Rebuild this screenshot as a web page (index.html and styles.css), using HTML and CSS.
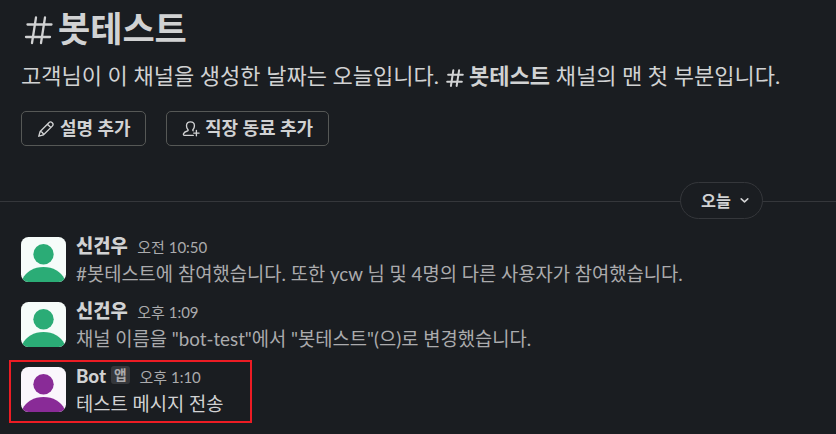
FILE: index.html
```
<!DOCTYPE html>
<html lang="ko">
<head>
<meta charset="utf-8">
<title>봇테스트</title>
<link rel="stylesheet" href="styles.css">
</head>
<body>
<main class="channel">
  <header class="intro">
    <h1 class="title">
      <svg class="hash" viewBox="0 0 32 30" fill="none" stroke="currentColor" stroke-width="2.3" stroke-linecap="round"><path d="M15 2.500 11 28M24 2.500 20 28M6.500 9.500H30.500M5 22H29"/></svg>
      <span>봇테스트</span>
    </h1>
    <p class="desc">고객님이 이 채널을 생성한 날짜는 오늘입니다. <svg class="hash-small" viewBox="0 0 30 30" fill="none" stroke="currentColor" stroke-width="3.4" stroke-linecap="round"><path d="M12.2 2.2 8.2 28.2M21.8 2.2 17.8 28.2M3.6 9.6H28M2 21.4H26.4"/></svg><b>봇테스트</b> 채널의 맨 첫 부분입니다.</p>
    <div class="actions">
      <button class="btn"><svg class="icon" viewBox="0 0 20 20" fill="none" stroke="currentColor" stroke-width="1.5" stroke-linecap="round" stroke-linejoin="round"><path d="M2 18 3.500 12.700 13.200 3C14.300 1.900 15.600 1.800 16.900 3.100S18.100 5.700 17 6.800L7.300 16.500ZM11.600 4.700 15.300 8.400M3.800 12.700C5.500 13.200 6.800 14.500 7.300 16.200"/></svg>설명 추가</button>
      <button class="btn btn-invite"><svg class="icon" viewBox="0 0 20 20" fill="none" stroke="currentColor" stroke-width="1.5" stroke-linecap="round" stroke-linejoin="round"><path d="M12.600 17H2.600C1.600 17 1.400 16.200 1.700 15.300 2.300 13.500 3.800 12.700 5.900 12.200 7 11.900 7.100 11.200 6.500 10.500 5.500 9.400 5 8 5 6.300 5 3.700 6.900 2 9.400 2S13.800 3.700 13.800 6.300C13.800 8 13.300 9.400 12.300 10.500 11.800 11.100 11.900 11.600 12.400 12M16 11.500V17.500M13 14.500H19"/></svg>직장 동료 추가</button>
    </div>
  </header>
  <div class="divider"><span class="line"></span><button class="date">오늘<svg class="chevron" viewBox="0 0 10 10" fill="none" stroke="currentColor" stroke-width="1.4" stroke-linecap="round" stroke-linejoin="round"><path d="M2 3.500 5 6.300 8 3.500"/></svg></button><span class="line line-end"></span></div>
  <section class="messages">
    <article class="message">
      <svg class="avatar" viewBox="0 0 45 45"><rect width="45" height="45" fill="#f6fcfa"/><g fill="#2bac76"><circle cx="22.5" cy="17.3" r="10.2"/><path d="M1.500 45V42C5 34.500 13 30 22.500 30S40 34.500 43.500 42V45Z"/></g></svg>
      <div class="body">
        <div class="meta"><b class="name">신건우</b><time class="time">오전 10:50</time></div>
        <p class="text muted">#봇테스트에 참여했습니다. 또한 ycw 님 및 4명의 다른 사용자가 참여했습니다.</p>
      </div>
    </article>
    <article class="message">
      <svg class="avatar" viewBox="0 0 45 45"><rect width="45" height="45" fill="#f6fcfa"/><g fill="#2bac76"><circle cx="22.5" cy="17.3" r="10.2"/><path d="M1.500 45V42C5 34.500 13 30 22.500 30S40 34.500 43.500 42V45Z"/></g></svg>
      <div class="body">
        <div class="meta"><b class="name">신건우</b><time class="time">오후 1:09</time></div>
        <p class="text muted">채널 이름을 "bot-test"에서 "봇테스트"(으)로 변경했습니다.</p>
      </div>
    </article>
    <article class="message marked">
      <svg class="avatar" viewBox="0 0 45 45"><rect width="45" height="45" fill="#faf6fc"/><g fill="#892b97"><circle cx="22.5" cy="17.3" r="10.2"/><path d="M1.500 45V42C5 34.500 13 30 22.500 30S40 34.500 43.500 42V45Z"/></g></svg>
      <div class="body">
        <div class="meta"><b class="name">Bot</b><span class="badge">앱</span><time class="time">오후 1:10</time></div>
        <p class="text">테스트 메시지 전송</p>
      </div>
    </article>
  </section>
</main>
</body>
</html>
```
FILE: styles.css
```
* { box-sizing: border-box; }
body {
  margin: 0;
  background: #1a1d21;
  color: #d1d2d3;
  font-family: Lato, "Noto Sans CJK KR", sans-serif;
  font-size: 18.75px;
}
.channel { height: 434px; overflow: hidden; }
.intro { padding: 8px 0 0 21px; }
.title { display: flex; align-items: center; gap: 5px; margin: 0; height: 40px; font-size: 35px; font-weight: 700; line-height: 40px; }
.hash { width: 32px; height: 30px; margin-top: 4px; }
.desc { margin: 11px 0 0; font-size: 22px; line-height: 34px; white-space: nowrap; }
.hash-small { width: 18px; height: 18px; margin: 0 5px 0 1.5px; vertical-align: -3px; }
.actions { display: flex; gap: 20px; margin-top: 18px; }
.btn {
  display: flex; align-items: center; width: 125px; height: 35px; padding: 0 0 0 15px; gap: 5px;
  border: 1px solid #565856; border-radius: 5px; background: none; color: inherit;
  font: 700 18px/33px Lato, "Noto Sans CJK KR", sans-serif; white-space: nowrap;
}
.btn-invite { width: 163px; }
.icon { flex: none; width: 18px; height: 18px; }
.divider { display: flex; align-items: center; height: 37px; margin-top: 36px; }
.line { flex: 1; height: 1px; margin-top: 1px; background: #35373b; }
.line-end { flex: 0 0 73px; }
.date {
  display: flex; align-items: center; gap: 8px; width: 83px; height: 37px; padding: 0 0 0 20px;
  border: 1px solid #35373b; border-radius: 19px; background: none; color: inherit;
  font: 700 16.25px/34px Lato, "Noto Sans CJK KR", sans-serif;
}
.chevron { width: 11px; height: 11px; }
.messages { padding: 8px 9px 0; }
.message { display: flex; gap: 10px; width: max-content; height: 65px; padding: 10px 12px 0; }
.avatar { flex: none; width: 45px; height: 45px; border-radius: 7.5px; overflow: hidden; }
.meta { display: flex; align-items: baseline; height: 28px; line-height: 27px; margin-top: -5px; }
.name { font-weight: 900; }
.time { margin-left: 9.5px; font-size: 15px; color: #ababad; }
.text { margin: 0; line-height: 28px; white-space: nowrap; }
.muted { color: #ababad; }
.badge { align-self: flex-start; margin: 4px 0 0 5px; padding: 0 3px; width: 19px; height: 18px; border-radius: 3px; background: #35373b; color: #ababad; font-size: 13.75px; font-weight: 700; line-height: 18px; }
.marked { width: 243px; height: 63px; margin-top: 3px; padding: 5px 10px; border: 2px solid #ec1c24; }
```
